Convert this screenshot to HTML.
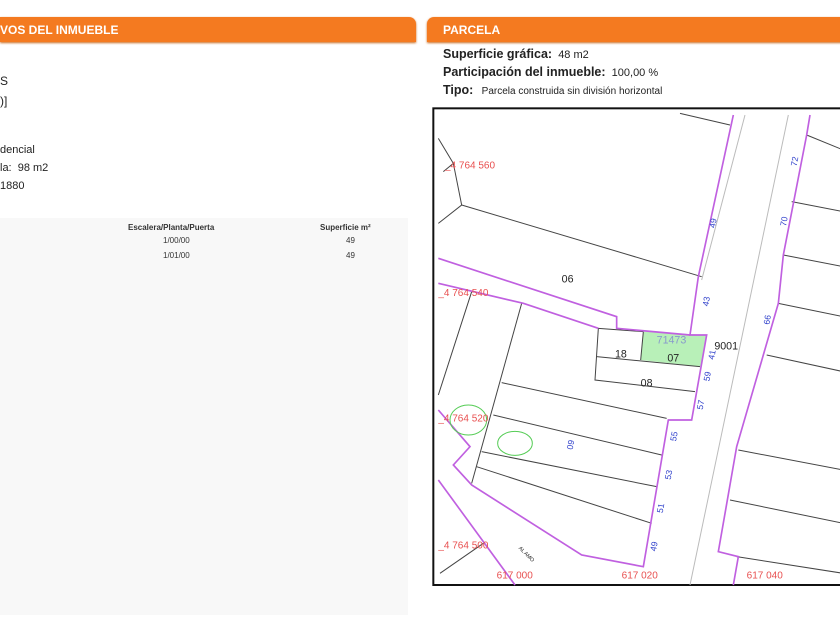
<!DOCTYPE html>
<html><head><meta charset="utf-8"><style>
body{margin:0;width:840px;height:630px;overflow:hidden;background:#fff;font-family:"Liberation Sans",sans-serif;position:relative}
.hdr{position:absolute;top:17px;height:25px;background:#f47a20;color:#fff;font-weight:bold;font-size:12px;line-height:26px;box-shadow:0 1px 2px #c96a1e}
.t{position:absolute;font-size:11px;color:#222;white-space:nowrap}
.b{font-weight:bold;font-size:12.5px;color:#222}
.grey{position:absolute;left:0;top:218px;width:408px;height:397px;background:#f8f8f8}
.th{position:absolute;font-size:8px;font-weight:bold;color:#333}
.td{position:absolute;font-size:8px;color:#333}
</style></head><body>
<div class="hdr" style="left:0;width:416px;border-radius:0 7px 0 0;padding-left:0">VOS DEL INMUEBLE</div>
<div class="hdr" style="left:427px;width:413px;border-radius:7px 0 0 0;padding-left:16px">PARCELA</div>
<div class="t" style="left:0;top:74px;font-size:12px">S</div>
<div class="t" style="left:0;top:94px;font-size:12px">)]</div>
<div class="t" style="left:0;top:144px">dencial</div>
<div class="t" style="left:0;top:162px">la:&nbsp; 98 m2</div>
<div class="t" style="left:0;top:180px">1880</div>
<div class="grey"></div>
<div class="th" style="left:128px;top:223px">Escalera/Planta/Puerta</div>
<div class="th" style="left:320px;top:223px">Superficie m²</div>
<div class="td" style="left:163px;top:236px">1/00/00</div>
<div class="td" style="left:346px;top:236px">49</div>
<div class="td" style="left:163px;top:251px">1/01/00</div>
<div class="td" style="left:346px;top:251px">49</div>

<div class="t" style="left:443px;top:47px"><span class="b">Superficie gráfica:</span>&nbsp; 48 m2</div>
<div class="t" style="left:443px;top:65px"><span class="b">Participación del inmueble:</span>&nbsp; 100,00 %</div>
<div class="t" style="left:443px;top:83px;font-size:10px"><span class="b">Tipo:</span>&nbsp;&nbsp; Parcela construida sin división horizontal</div>

<svg style="position:absolute;left:430px;top:100px" width="410" height="490" viewBox="0 0 1230 1470">
<rect x="10" y="25" width="1240" height="1430" fill="#fff" stroke="#111" stroke-width="6"/>
<polygon points="640,695 830,705 812,800 632,780" fill="#b8f0b8"/>
<g stroke="#444" stroke-width="3" fill="none">
<polyline points="750,40 900,75"/>
<polyline points="25,115 70,190 40,215"/><polyline points="70,190 95,315 25,370"/>
<polyline points="95,315 815,530"/>
<polyline points="1130,105 1240,150"/><polyline points="1085,305 1240,335"/><polyline points="1060,465 1240,500"/><polyline points="1045,610 1240,650"/><polyline points="1010,765 1240,815"/><polyline points="925,1050 1240,1110"/><polyline points="900,1200 1240,1270"/><polyline points="920,1370 1240,1420"/>
<polyline points="125,575 25,885"/><polyline points="275,610 125,1150"/>
<polyline points="215,848 710,955"/><polyline points="190,945 695,1065"/><polyline points="155,1055 680,1160"/><polyline points="140,1100 665,1270"/>
<polyline points="505,685 640,695"/><polyline points="505,685 495,840 795,875"/><polyline points="500,770 810,800"/><polyline points="640,695 632,780"/>
<polyline points="30,1420 160,1330"/>
</g>
<g stroke="#bbb" stroke-width="3" fill="none"><polyline points="945,45 815,540"/><polyline points="1075,45 780,1455"/></g>
<g stroke="#c060e0" stroke-width="5" fill="none">
<polyline points="910,45 805,530 780,705 830,705 785,960 715,960 640,1400 455,1365 125,1155 70,1095 120,1040 25,930"/>
<polyline points="25,475 560,650 560,685 780,705"/>
<polyline points="25,550 280,610 505,685"/>
<polyline points="1140,45 1130,105 1060,465 1045,610 920,1040 865,1355 925,1370 910,1455"/>
<polyline points="25,1140 255,1455"/>
</g>
<g stroke="#5c5" stroke-width="3" fill="none"><ellipse cx="255" cy="1030" rx="52" ry="36"/><ellipse cx="115" cy="960" rx="55" ry="45"/></g>
<g fill="#e85050" font-size="30" font-family="Liberation Sans">
<text x="45" y="205">_4 764 560</text><text x="25" y="588">_4 764 540</text><text x="25" y="965">_4 764 520</text><text x="25" y="1345">_4 764 500</text>
<text x="200" y="1435">617 000</text><text x="575" y="1435">617 020</text><text x="950" y="1435">617 040</text>
</g>
<g fill="#3344cc" font-size="26" font-family="Liberation Sans">
<text transform="translate(855,385) rotate(-80)">49</text><text transform="translate(835,620) rotate(-80)">43</text><text transform="translate(852,780) rotate(-80)">41</text><text transform="translate(838,845) rotate(-80)">59</text><text transform="translate(818,930) rotate(-80)">57</text><text transform="translate(738,1025) rotate(-80)">55</text><text transform="translate(722,1140) rotate(-80)">53</text><text transform="translate(698,1240) rotate(-80)">51</text><text transform="translate(678,1355) rotate(-80)">49</text><text transform="translate(1100,200) rotate(-80)">72</text><text transform="translate(1068,380) rotate(-80)">70</text><text transform="translate(1018,675) rotate(-80)">66</text><text transform="translate(428,1050) rotate(-80)">09</text>
</g>
<g fill="#222" font-size="32" font-family="Liberation Sans">
<text x="395" y="548">06</text><text x="555" y="772">18</text><text x="712" y="785">07</text><text x="632" y="860">08</text><text x="853" y="748">9001</text>
</g>
<text x="680" y="730" fill="#8899cc" font-size="32" font-family="Liberation Sans">71473</text>
<text transform="translate(265,1345) rotate(45)" fill="#222" font-size="16" font-family="Liberation Sans">AL AMO</text>
</svg>
</body></html>
